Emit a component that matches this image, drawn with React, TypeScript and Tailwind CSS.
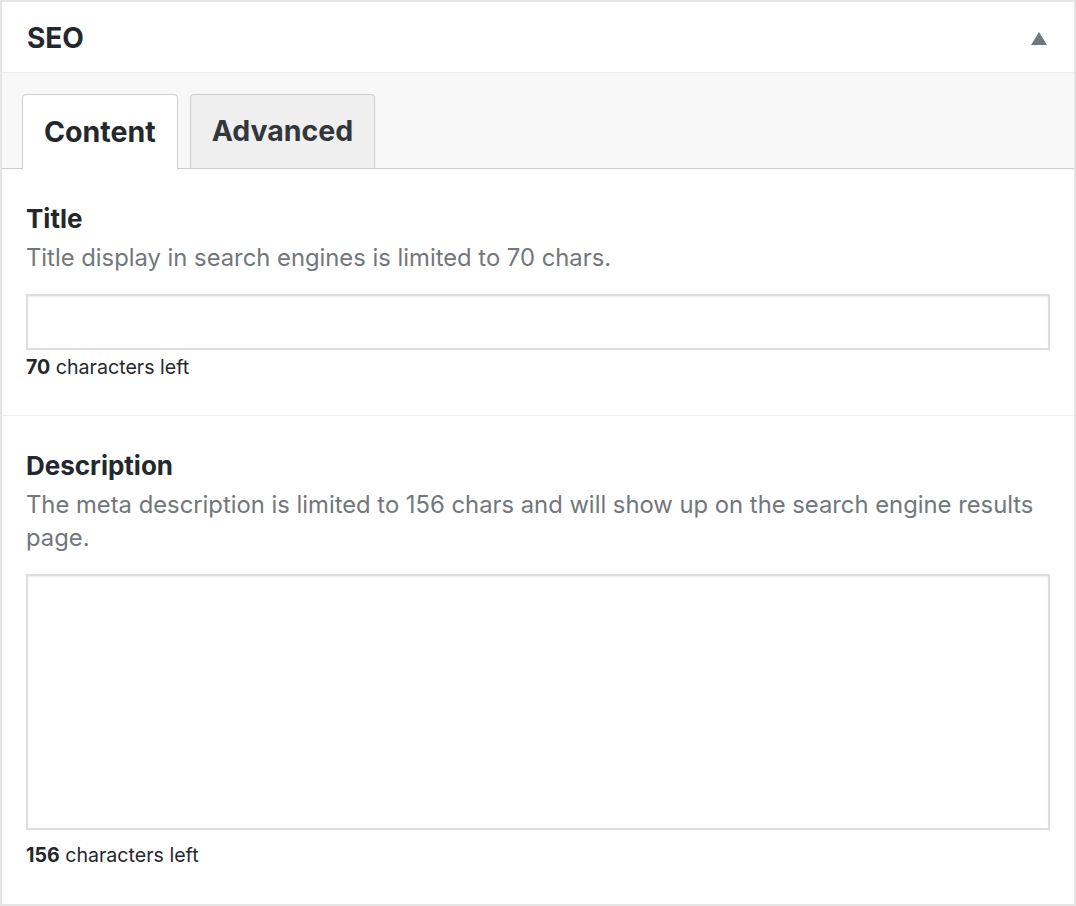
import React from "react";

export default function App() {
  const font = { fontFamily: 'Inter, "Noto Sans", "Liberation Sans", sans-serif' };
  return (
    <div className="w-[1076px] h-[906px] bg-white" style={font}>
      <div className="h-full border-2 border-[#e5e5e5] flex flex-col">
        <div className="h-[71px] shrink-0 flex items-center justify-between pl-[25px] pr-[27px] pt-[2px] border-b border-[#eeeeee]">
          <span className="text-[28px] font-bold text-[#23282d]">SEO</span>
          <svg width="16" height="13" viewBox="0 0 16 13">
            <polygon points="8,0 16,13 0,13" fill="#72777c" />
          </svg>
        </div>
        <div className="shrink-0 bg-[#f8f8f8] pt-[21px] pl-[20px] flex gap-[12px] border-b border-[#cccccc] h-[96px]">
          <div className="h-[75px] px-[21px] flex items-center bg-white border border-[#cccccc] border-b-0 rounded-t-[4px] text-[28.5px] font-bold text-[#23282d]">
            Content
          </div>
          <div className="h-[74px] px-[21px] flex items-center bg-[#efefef] border border-[#cccccc] border-b-0 rounded-t-[4px] text-[28.5px] font-bold text-[#32373c]">
            Advanced
          </div>
        </div>
        <div className="px-[24px] pt-[34px] pb-[36px] border-b border-[#eeeeee]">
          <div className="text-[26px] leading-[32px] font-bold text-[#23282d]">Title</div>
          <div className="text-[23.8px] leading-[33px] text-[#72777c] mt-[6px]">
            Title display in search engines is limited to 70 chars.
          </div>
          <input
            className="mt-[20px] block w-full h-[56px] border-2 border-[#dddddd] bg-white shadow-[inset_0_1px_2px_rgba(0,0,0,0.07)] outline-none"
            type="text"
          />
          <div className="text-[19.6px] leading-[24px] text-[#23282d] mt-[5px]">
            <span className="font-bold">70</span> characters left
          </div>
        </div>
        <div className="px-[24px] pt-[34px] flex-1">
          <div className="text-[26px] leading-[32px] font-bold text-[#23282d]">Description</div>
          <div className="text-[23.8px] leading-[33px] text-[#72777c] mt-[6px]">
            The meta description is limited to 156 chars and will show up on the search engine results page.
          </div>
          <textarea
            className="mt-[20px] block w-full h-[256px] border-2 border-[#dddddd] bg-white shadow-[inset_0_1px_2px_rgba(0,0,0,0.07)] outline-none resize-none"
          />
          <div className="text-[19.6px] leading-[24px] text-[#23282d] mt-[13px]">
            <span className="font-bold">156</span> characters left
          </div>
        </div>
      </div>
    </div>
  );
}
